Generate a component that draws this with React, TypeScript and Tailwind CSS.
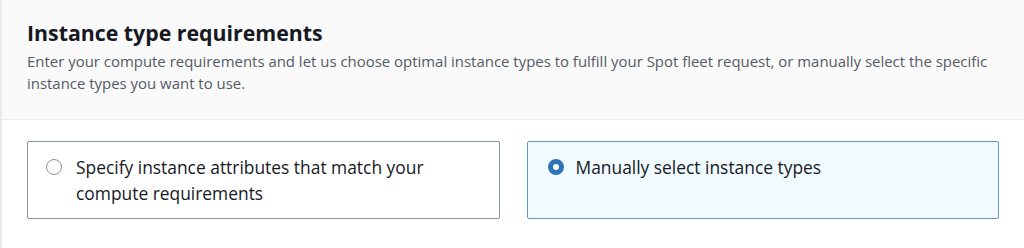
export default function App() {
  const font = { fontFamily: '"Open Sans", "Noto Sans", Arial, sans-serif' };
  return (
    <div className="w-[1024px] h-[248px] bg-white border-l-2 border-[#e9ebed] overflow-hidden" style={font}>
      <div className="bg-[#fafafa] border-b border-[#eaeded] h-[120px] pl-[25px] pr-[30px] pt-[19px]">
        <h2 className="text-[21.3px] leading-[28px] font-bold text-[#16191f]">Instance type requirements</h2>
        <p className="mt-[4px] text-[14.95px] leading-[21.5px] text-[#545b64]">
          Enter your compute requirements and let us choose optimal instance types to fulfill your Spot fleet request, or manually select the specific instance types you want to use.
        </p>
      </div>
      <div className="grid grid-cols-2 gap-[27px] pl-[25px] pr-[25px] pt-[21px]">
        <label className="flex items-start gap-[14px] h-[78px] rounded-[2px] border border-[#879596] bg-white pl-[18px] pr-4 pt-[12px]">
          <span className="mt-[5px] w-[16px] h-[16px] shrink-0 rounded-full border border-[#879596] bg-white" />
          <span className="text-[17.4px] leading-[26px] text-[#16191f]">Specify instance attributes that match your compute requirements</span>
        </label>
        <label className="flex items-start gap-[12px] h-[78px] rounded-[2px] border border-[#5f96d6] bg-[#f1faff] pl-[20px] pr-4 pt-[12px]">
          <span className="mt-[5px] w-[16px] h-[16px] shrink-0 rounded-full border-[5px] border-[#2e73b8] bg-white" />
          <span className="text-[17.4px] leading-[26px] text-[#16191f]">Manually select instance types</span>
        </label>
      </div>
    </div>
  );
}
